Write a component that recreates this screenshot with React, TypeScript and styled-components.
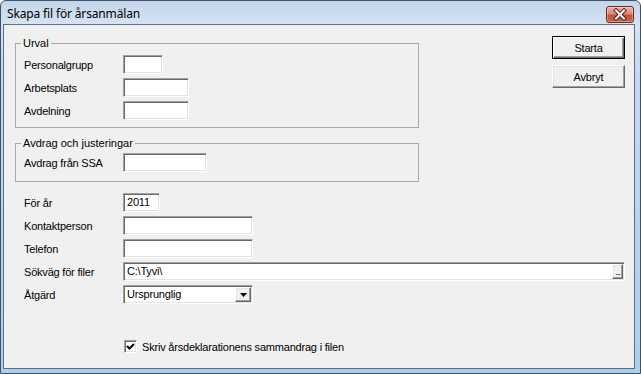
import React from 'react';
import styled, { createGlobalStyle } from 'styled-components';

const GlobalStyle = createGlobalStyle`
  html, body {
    margin: 0;
    padding: 0;
    background: #ffffff;
  }
  body {
    font-family: 'Liberation Sans', Arial, sans-serif;
    font-size: 11px;
    color: #000;
  }
`;

const GROUP_URVAL = [
  { label: 'Personalgrupp', width: 40 },
  { label: 'Arbetsplats', width: 66 },
  { label: 'Avdelning', width: 66 },
];

export default function App() {
  return (
    <>
      <GlobalStyle />
      <Window>
        <TitleBar>
          <Caption>Skapa fil för årsanmälan</Caption>
          <CloseButton aria-label="Stäng">
            <svg width="28" height="17" viewBox="0 0 28 17">
              <path d="M10 4.5 L18 12.5 M18 4.5 L10 12.5" stroke="#5a1a12" strokeWidth="4" strokeLinecap="square" />
              <path d="M10 4.5 L18 12.5 M18 4.5 L10 12.5" stroke="#ffffff" strokeWidth="2" strokeLinecap="square" />
            </svg>
          </CloseButton>
        </TitleBar>

        <Client>
          <TopSection>
            <Groups>
              <GroupBox $padTop={5} $padBottom={7}>
                <Legend>Urval</Legend>
                <Rows>
                  {GROUP_URVAL.map((f) => (
                    <Row key={f.label}>
                      <Label>{f.label}</Label>
                      <TextBox $width={f.width} />
                    </Row>
                  ))}
                </Rows>
              </GroupBox>

              <GroupBox $padTop={3} $padBottom={9}>
                <Legend>Avdrag och justeringar</Legend>
                <Rows>
                  <Row>
                    <Label>Avdrag från SSA</Label>
                    <TextBox $width={84} />
                  </Row>
                </Rows>
              </GroupBox>
            </Groups>

            <Buttons>
              <PushButton $default>Starta</PushButton>
              <PushButton>Avbryt</PushButton>
            </Buttons>
          </TopSection>

          <FormRows>
            <Row>
              <Label>För år</Label>
              <TextBox $width={37}>2011</TextBox>
            </Row>
            <Row>
              <Label>Kontaktperson</Label>
              <TextBox $width={130} />
            </Row>
            <Row>
              <Label>Telefon</Label>
              <TextBox $width={130} />
            </Row>
            <Row>
              <Label>Sökväg för filer</Label>
              <TextBox $grow>
                <FieldText>C:\Tyvi\</FieldText>
                <BrowseButton>...</BrowseButton>
              </TextBox>
            </Row>
            <Row>
              <Label>Åtgärd</Label>
              <TextBox $width={130}>
                <FieldText>Ursprunglig</FieldText>
                <DropButton>
                  <svg width="7" height="4" viewBox="0 0 7 4">
                    <path d="M0 0 H7 L3.5 4 Z" fill="#000" />
                  </svg>
                </DropButton>
              </TextBox>
            </Row>
          </FormRows>

          <CheckRow>
            <CheckBox>
              <svg width="9" height="9" viewBox="0 0 9 9">
                <path d="M1 4 L3.5 6.5 L8 2" stroke="#000" strokeWidth="2" fill="none" />
              </svg>
            </CheckBox>
            <span>Skriv årsdeklarationens sammandrag i filen</span>
          </CheckRow>
        </Client>
      </Window>
    </>
  );
}

const Window = styled.div`
  width: 641px;
  height: 374px;
  box-sizing: border-box;
  border: 1px solid #3f5068;
  border-radius: 6px 6px 0 0;
  background: linear-gradient(to bottom, #c3d5eb 0px, #d6e3f2 24px, #c6daf0 60px, #a9d0ee 100%);
  display: flex;
  flex-direction: column;
  overflow: hidden;
`;

const TitleBar = styled.div`
  height: 23px;
  display: flex;
  align-items: flex-start;
  padding: 0 6px 0 6px;
  flex-shrink: 0;
`;

const Caption = styled.div`
  font-family: 'Noto Sans', 'Open Sans', sans-serif;
  font-size: 12px;
  line-height: 14px;
  letter-spacing: -0.15px;
  padding-top: 6px;
  color: #000;
  white-space: nowrap;
`;

const CloseButton = styled.div`
  margin-left: auto;
  margin-top: 5px;
  width: 28px;
  height: 17px;
  box-sizing: border-box;
  border: 1px solid #6d2a22;
  border-radius: 3px;
  background: linear-gradient(to bottom, #e8b2a6 0%, #d98a78 45%, #c4513d 55%, #c9634c 100%);
  box-shadow: inset 0 0 0 1px rgba(255, 255, 255, 0.35);
  display: flex;
  align-items: center;
  justify-content: center;

  svg {
    display: block;
    margin: -1px;
  }
`;

const Client = styled.div`
  flex: 1;
  margin: 0 5px 4px 2px;
  border: 1px solid #5d6d82;
  background: #f0f0f0;
  padding: 11px 9px 0 11px;
  display: flex;
  flex-direction: column;
`;

const TopSection = styled.div`
  display: flex;
  justify-content: space-between;
  align-items: flex-start;
`;

const Groups = styled.div`
  width: 404px;
  display: flex;
  flex-direction: column;
  gap: 8px;
`;

const GroupBox = styled.fieldset<{ $padTop: number; $padBottom: number }>`
  margin: 0;
  min-width: 0;
  border: 1px solid #a8a8a8;
  padding: ${(p) => p.$padTop}px 8px ${(p) => p.$padBottom}px 8px;
`;

const Legend = styled.legend`
  padding: 0 2px;
  margin-left: -3px;
  line-height: 14px;
  font-size: 11px;
`;

const Rows = styled.div`
  display: flex;
  flex-direction: column;
  gap: 4px;
`;

const Row = styled.div`
  display: flex;
  align-items: center;
  height: 19px;
`;

const Label = styled.span`
  width: 99px;
  flex-shrink: 0;
  letter-spacing: -0.2px;
  white-space: nowrap;
`;

const TextBox = styled.div<{ $width?: number; $grow?: boolean }>`
  box-sizing: border-box;
  height: 19px;
  width: ${(p) => (p.$width ? `${p.$width}px` : 'auto')};
  flex: ${(p) => (p.$grow ? '1' : '0 0 auto')};
  background: #fff;
  border: 1px solid;
  border-color: #a0a0a0 #ffffff #ffffff #a0a0a0;
  box-shadow: inset 1px 1px 0 #696969, inset -1px -1px 0 #e3e3e3;
  padding: 0 2px 0 3px;
  display: flex;
  align-items: center;
  letter-spacing: -0.2px;
  line-height: 15px;
`;

const FieldText = styled.span`
  flex: 1;
  white-space: nowrap;
`;

const raised = `
  background: #f0f0f0;
  border: 1px solid;
  border-color: #ffffff #696969 #696969 #ffffff;
  box-shadow: inset -1px -1px 0 #a0a0a0, inset 1px 1px 0 #e3e3e3;
`;

const BrowseButton = styled.div`
  ${raised}
  box-sizing: border-box;
  width: 11px;
  height: 15px;
  margin-right: -1px;
  font-size: 9px;
  line-height: 15px;
  text-align: center;
  letter-spacing: -1px;
  color: #000;
`;

const DropButton = styled.div`
  ${raised}
  box-sizing: border-box;
  width: 16px;
  height: 15px;
  margin-right: -1px;
  display: flex;
  align-items: center;
  justify-content: center;

  svg {
    display: block;
  }
`;

const Buttons = styled.div`
  display: flex;
  flex-direction: column;
  gap: 6px;
`;

const PushButton = styled.div<{ $default?: boolean }>`
  box-sizing: border-box;
  width: 73px;
  height: 23px;
  background: #f0f0f0;
  border: 1px solid;
  border-color: ${(p) => (p.$default ? '#000000' : '#ffffff #696969 #696969 #ffffff')};
  box-shadow: ${(p) =>
    p.$default
      ? 'inset 1px 1px 0 #ffffff, inset -1px -1px 0 #696969, inset -2px -2px 0 #a0a0a0'
      : 'inset -1px -1px 0 #a0a0a0, inset 1px 1px 0 #e3e3e3'};
  display: flex;
  align-items: center;
  justify-content: center;
  letter-spacing: -0.2px;
`;

const FormRows = styled.div`
  margin-top: 11px;
  padding-left: 9px;
  display: flex;
  flex-direction: column;
  gap: 4px;
`;

const CheckRow = styled.div`
  margin-top: 36px;
  padding-left: 109px;
  display: flex;
  align-items: center;
  gap: 5px;
  height: 13px;
  letter-spacing: -0.2px;
`;

const CheckBox = styled.div`
  box-sizing: border-box;
  width: 13px;
  height: 13px;
  background: #fff;
  border: 1px solid;
  border-color: #a0a0a0 #ffffff #ffffff #a0a0a0;
  box-shadow: inset 1px 1px 0 #696969, inset -1px -1px 0 #e3e3e3;
  display: flex;
  align-items: center;
  justify-content: center;

  svg {
    display: block;
  }
`;
